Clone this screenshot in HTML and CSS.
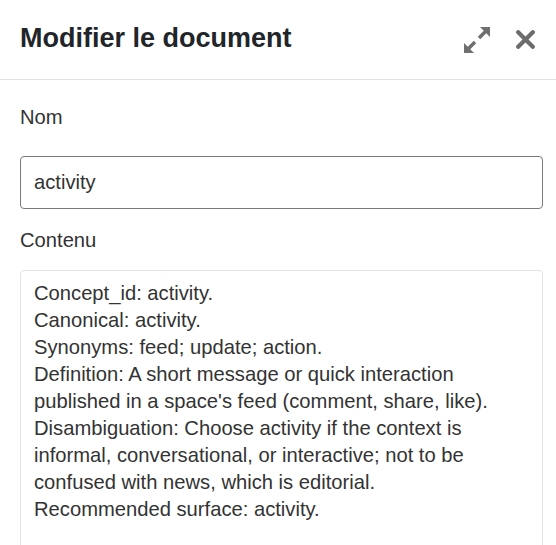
FILE: index.html
```html
<!DOCTYPE html>
<html lang="fr">
<head>
<meta charset="utf-8">
<title>Modifier le document</title>
<link rel="stylesheet" href="styles.css">
</head>
<body>
<div class="modal">
  <header class="modal-header">
    <h1 class="modal-title">Modifier le document</h1>
    <div class="modal-actions">
      <button class="icon-btn expand" aria-label="Agrandir">
        <svg width="26" height="26" viewBox="0 0 26 26">
          <polygon points="26,0 26,10 16,0" fill="#707070"/>
          <line x1="21.5" y1="4.5" x2="15" y2="11" stroke="#707070" stroke-width="3.6"/>
          <polygon points="0,26 0,16 10,26" fill="#707070"/>
          <line x1="4.5" y1="21.5" x2="11" y2="15" stroke="#707070" stroke-width="3.6"/>
        </svg>
      </button>
      <button class="icon-btn close" aria-label="Fermer">
        <svg width="19" height="19" viewBox="0 0 19 19">
          <line x1="2.2" y1="2.2" x2="16.8" y2="16.8" stroke="#6c6c6c" stroke-width="4.2" stroke-linecap="round"/>
          <line x1="16.8" y1="2.2" x2="2.2" y2="16.8" stroke="#6c6c6c" stroke-width="4.2" stroke-linecap="round"/>
        </svg>
      </button>
    </div>
  </header>
  <div class="modal-body">
    <label class="field-label">Nom</label>
    <div class="text-input">activity</div>
    <label class="field-label label-content">Contenu</label>
    <div class="text-area">Concept_id: activity.<br>Canonical: activity.<br>Synonyms: feed; update; action.<br>Definition: A short message or quick interaction<br>published in a space's feed (comment, share, like).<br>Disambiguation: Choose activity if the context is<br>informal, conversational, or interactive; not to be<br>confused with news, which is editorial.<br>Recommended surface: activity.</div>
  </div>
</div>
</body>
</html>
```
FILE: styles.css
```css
html, body {
  margin: 0;
  padding: 0;
  background: #ffffff;
  overflow: hidden;
}
body {
  font-family: "Liberation Sans", Arial, sans-serif;
  color: #333333;
}
.modal-header {
  height: 79px;
  border-bottom: 1px solid #e3e3e3;
  display: flex;
  align-items: center;
  justify-content: space-between;
  padding: 0 21px 0 20px;
}
.modal-title {
  margin: 0 0 2px 0;
  font-size: 27px;
  font-weight: bold;
  line-height: 31px;
  color: #212529;
}
.modal-actions {
  display: flex;
  align-items: center;
  gap: 26px;
}
.icon-btn {
  border: 0;
  background: none;
  padding: 0;
  display: flex;
  cursor: pointer;
}
.modal-body {
  padding: 24px 13px 0 20px;
}
.field-label {
  display: block;
  font-size: 20.2px;
  line-height: 27px;
}
.text-input {
  margin-top: 25px;
  height: 51px;
  border: 1px solid #7a7a7a;
  border-radius: 4px;
  box-sizing: content-box;
  padding: 0 13px;
  font-size: 20.2px;
  line-height: 51px;
}
.label-content {
  margin-top: 18px;
}
.text-area {
  margin-top: 16px;
  border: 1px solid #e3e3e3;
  border-radius: 4px;
  padding: 9px 13px;
  height: 300px;
  font-size: 20.2px;
  line-height: 27px;
  white-space: nowrap;
}
```
